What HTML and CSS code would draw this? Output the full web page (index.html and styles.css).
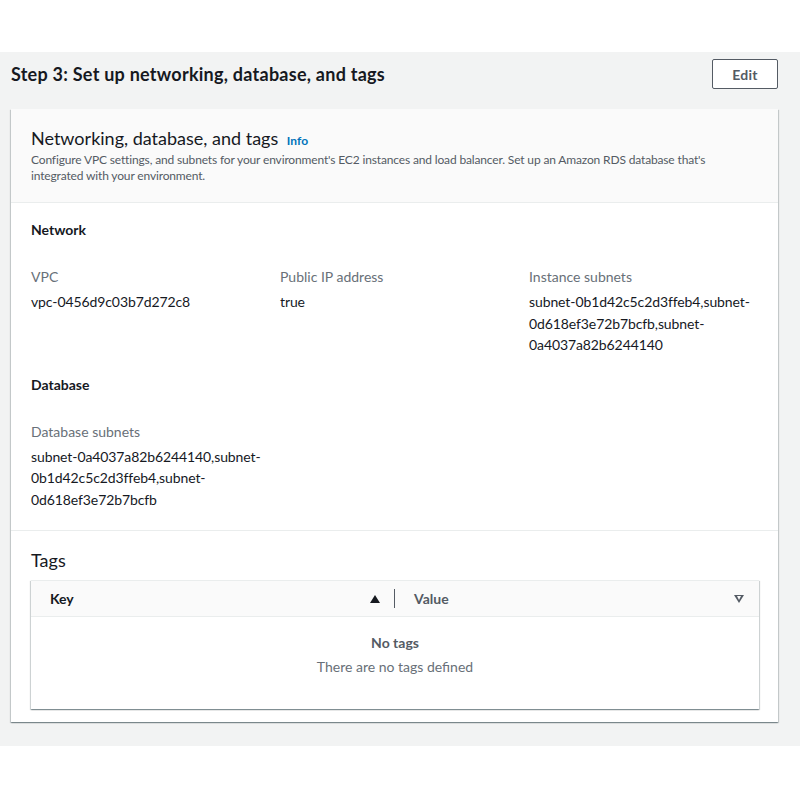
FILE: index.html
```html
<!DOCTYPE html>
<html>
<head>
<meta charset="utf-8">
<link rel="stylesheet" href="styles.css">
</head>
<body>
<div class="top"></div>
<main class="step">
  <div class="step-head">
    <h2 class="step-title">Step 3: Set up networking, database, and tags</h2>
    <button class="btn">Edit</button>
  </div>
  <section class="card">
    <header class="card-head">
      <h3 class="card-title">Networking, database, and tags <a class="info">Info</a></h3>
      <p class="card-desc">Configure VPC settings, and subnets for your environment's EC2 instances and load balancer. Set up an Amazon RDS database that's integrated with your environment.</p>
    </header>
    <div class="card-body">
      <h4 class="group-title">Network</h4>
      <div class="cols">
        <div class="kv"><div class="k">VPC</div><div class="v">vpc-0456d9c03b7d272c8</div></div>
        <div class="kv"><div class="k">Public IP address</div><div class="v">true</div></div>
        <div class="kv"><div class="k">Instance subnets</div><div class="v">subnet-0b1d42c5c2d3ffeb4,subnet-0d618ef3e72b7bcfb,subnet-0a4037a82b6244140</div></div>
      </div>
      <h4 class="group-title db">Database</h4>
      <div class="cols">
        <div class="kv"><div class="k">Database subnets</div><div class="v">subnet-0a4037a82b6244140,subnet-0b1d42c5c2d3ffeb4,subnet-0d618ef3e72b7bcfb</div></div>
      </div>
    </div>
    <div class="tags">
      <h3 class="tags-title">Tags</h3>
      <div class="table">
        <div class="thead">
          <div class="th th-key"><span>Key</span><span class="sort-up"></span></div>
          <div class="th th-val"><span>Value</span><span class="sort-down"></span></div>
        </div>
        <div class="empty">
          <div class="empty-title">No tags</div>
          <div class="empty-text">There are no tags defined</div>
        </div>
      </div>
    </div>
  </section>
</main>
</body>
</html>
```

FILE: styles.css
```css
* { box-sizing: border-box; }
html, body { margin: 0; padding: 0; background: #fff; }
body { font-family: Lato, "Noto Sans", sans-serif; color: #16191f; font-size: 14px; }
.top { height: 52px; background: #fff; }
.step { background: #f2f3f3; padding: 7px 22px 24px 11px; }
.step-head { display: flex; justify-content: space-between; align-items: center; height: 30px; margin-bottom: 20px; }
.step-title { margin: 0; font-size: 18px; font-weight: 700; color: #16191f; letter-spacing: 0.25px; }
.btn { font-family: inherit; font-size: 14px; font-weight: 700; color: #545b64; background: #fff; border: 1px solid #545b64; border-radius: 2px; width: 66px; height: 30px; padding: 0; letter-spacing: 0.3px; }
.card { background: #fff; box-shadow: 0 1px 1px 0 rgba(0,28,36,.3), 1px 1px 1px 0 rgba(0,28,36,.15), -1px 1px 1px 0 rgba(0,28,36,.15); }
.card-head { background: #fafafa; border-bottom: 1px solid #eaeded; padding: 18px 20px 18px; }
.card-title { margin: 0; font-size: 18px; font-weight: 400; line-height: 22px; color: #16191f; }
.info { font-size: 12px; font-weight: 700; color: #0073bb; margin-left: 4px; }
.card-desc { margin: 0; font-size: 12px; line-height: 16px; color: #545b64; letter-spacing: -0.15px; }
.card-body { padding: 17px 20px 20px; border-bottom: 1px solid #eaeded; }
.group-title { margin: 0; font-size: 14px; font-weight: 700; line-height: 20px; }
.group-title.db { margin-top: 19px; }
.cols { display: grid; grid-template-columns: 249px 249px 1fr; margin-top: 27px; }
.k { color: #687078; line-height: 20px; }
.v { margin-top: 4px; line-height: 21.5px; color: #16191f; letter-spacing: -0.1px; }
.tags { padding: 18px 19px 13px 20px; }
.tags-title { margin: 0; font-size: 18px; font-weight: 400; line-height: 22px; }
.table { margin-top: 9px; box-shadow: 0 1px 1px 0 rgba(0,28,36,.3), 1px 1px 1px 0 rgba(0,28,36,.15), -1px 1px 1px 0 rgba(0,28,36,.15); border-top: 1px solid #eaeded; }
.thead { display: grid; grid-template-columns: 364px 1fr; background: #fafafa; border-bottom: 1px solid #eaeded; height: 36px; }
.th { display: flex; align-items: center; justify-content: space-between; font-weight: 700; color: #16191f; }
.th-key { padding: 0 14px 0 19px; border-right: 1px solid #545b64; margin: 8px 0; }
.th-val { padding: 0 15px 0 19px; color: #545b64; }
.sort-up { width: 0; height: 0; border-left: 5px solid transparent; border-right: 5px solid transparent; border-bottom: 8px solid #16191f; }
.sort-down { width: 10px; height: 8px; position: relative; }
.sort-down::before { content: ""; position: absolute; left: 0; top: 0; border-left: 5px solid transparent; border-right: 5px solid transparent; border-top: 8px solid #545b64; }
.sort-down::after { content: ""; position: absolute; left: 2.5px; top: 1.5px; border-left: 2.5px solid transparent; border-right: 2.5px solid transparent; border-top: 4px solid #fafafa; }
.empty { text-align: center; padding: 16px 0 32px; }
.empty-title { font-weight: 700; color: #545b64; line-height: 20px; }
.empty-text { color: #687078; line-height: 20px; margin-top: 4px; }
```
